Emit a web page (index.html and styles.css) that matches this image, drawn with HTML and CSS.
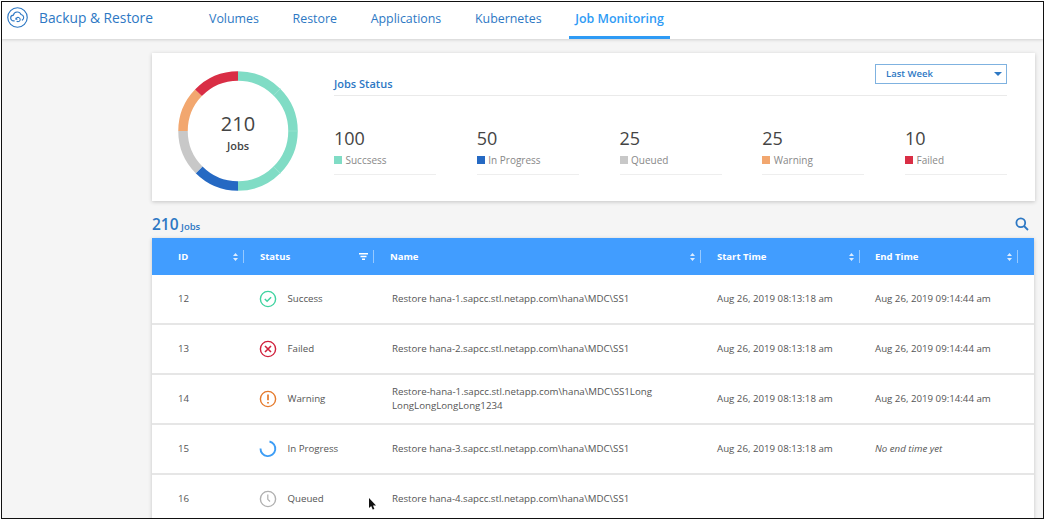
FILE: index.html
```html
<!DOCTYPE html>
<html>
<head>
  <title>Backup &amp; Restore</title>
  <meta name="viewport" content="width=device-width, initial-scale=1">
  <link rel="stylesheet" href="styles.css">
</head>
<body>
  <div class="frame">
    <div class="topbar">
      <div class="brand">
        <svg class="brand-icon" width="21" height="21" viewBox="0 0 22 22" fill="none" stroke="#2d78c4">
          <circle cx="11" cy="11" r="10.2" stroke-width="1.2"/>
          <path d="M8 14.5H7a3 3 0 0 1-.3-6 4.2 4.2 0 0 1 8-.6 3.2 3.2 0 0 1 .9 6.1" stroke-width="1.2"/>
          <path d="M9.5 12.5a2.2 2.2 0 1 1 .6 2.2M9.3 11.2v1.6h1.6" stroke-width="1.1"/>
        </svg>
        <span class="brand-name">Backup &amp; Restore</span>
      </div>
      <nav class="tabs">
        <a class="tab">Volumes</a>
        <a class="tab">Restore</a>
        <a class="tab">Applications</a>
        <a class="tab">Kubernetes</a>
        <a class="tab active">Job Monitoring</a>
      </nav>
    </div>

    <div class="content">
      <section class="card">
        <div class="donut">
          <svg width="120" height="120" viewBox="0 0 120 120" fill="none" stroke-width="9.5">
            <g transform="rotate(-90 60 60)">
              <circle cx="60" cy="60" r="55" pathLength="360" stroke="#80dcc5" stroke-dasharray="180 180"/>
              <circle cx="60" cy="60" r="55" pathLength="360" stroke="#2569c3" stroke-dasharray="45 315" stroke-dashoffset="-180"/>
              <circle cx="60" cy="60" r="55" pathLength="360" stroke="#c8c8c8" stroke-dasharray="45 315" stroke-dashoffset="-225"/>
              <circle cx="60" cy="60" r="55" pathLength="360" stroke="#f2a76f" stroke-dasharray="44 316" stroke-dashoffset="-270"/>
              <circle cx="60" cy="60" r="55" pathLength="360" stroke="#d92e45" stroke-dasharray="46 314" stroke-dashoffset="-314"/>
              <circle cx="60" cy="60" r="55" pathLength="360" stroke="#a4e6d6" stroke-width="10" stroke-dasharray="0.6 44.4 0.6 44.4 0.6 269.4" stroke-dashoffset="-44.7"/>
            </g>
          </svg>
          <div class="donut-label">
            <div class="donut-num">210</div>
            <div class="donut-txt">Jobs</div>
          </div>
        </div>
        <div class="summary">
          <div class="summary-head">
            <span class="summary-title">Jobs Status</span>
            <div class="select">Last Week<i class="caret"></i></div>
          </div>
          <div class="stats">
            <div class="stat"><div class="stat-num">100</div><div class="stat-lbl"><i class="dot teal"></i>Succsess</div></div>
            <div class="stat"><div class="stat-num">50</div><div class="stat-lbl"><i class="dot blue"></i>In Progress</div></div>
            <div class="stat"><div class="stat-num">25</div><div class="stat-lbl"><i class="dot grey"></i>Queued</div></div>
            <div class="stat"><div class="stat-num">25</div><div class="stat-lbl"><i class="dot orange"></i>Warning</div></div>
            <div class="stat"><div class="stat-num">10</div><div class="stat-lbl"><i class="dot red"></i>Failed</div></div>
          </div>
        </div>
      </section>

      <div class="jobs-head">
        <div class="jobs-count"><b>210</b> <span>Jobs</span></div>
        <svg width="14" height="14" viewBox="0 0 14 14" fill="none" stroke="#2d78c4" stroke-width="1.8">
          <circle cx="5.8" cy="5.8" r="4.4"/>
          <path d="M9 9l4 4"/>
        </svg>
      </div>

      <div class="table">
        <div class="row head">
          <div class="cell id">ID<svg class="sort" width="5" height="8" viewBox="0 0 5 8"><path d="M2.5 0L5 3H0zM2.5 8L0 5h5z"/></svg></div>
          <div class="cell status">Status<svg class="filter" width="9" height="7" viewBox="0 0 9 7"><path d="M0 0h9v1.6H0zM1.5 2.8h6v1.4h-6zM3 5.4h3V7H3z"/></svg></div>
          <div class="cell name">Name<svg class="sort" width="5" height="8" viewBox="0 0 5 8"><path d="M2.5 0L5 3H0zM2.5 8L0 5h5z"/></svg></div>
          <div class="cell start">Start Time<svg class="sort" width="5" height="8" viewBox="0 0 5 8"><path d="M2.5 0L5 3H0zM2.5 8L0 5h5z"/></svg></div>
          <div class="cell end">End Time<svg class="sort" width="5" height="8" viewBox="0 0 5 8"><path d="M2.5 0L5 3H0zM2.5 8L0 5h5z"/></svg></div>
        </div>

        <div class="row">
          <div class="cell id">12</div>
          <div class="cell status">
            <svg class="st-icon" width="18" height="18" viewBox="0 0 18 18" fill="none" stroke="#3fd3a0" stroke-width="1.4"><circle cx="9" cy="9" r="7.6"/><path d="M5.8 9l2.3 2.2 4-4" stroke-width="1.5"/></svg>
            Success
          </div>
          <div class="cell name">Restore hana-1.sapcc.stl.netapp.com\hana\MDC\SS1</div>
          <div class="cell start">Aug 26, 2019 08:13:18 am</div>
          <div class="cell end">Aug 26, 2019 09:14:44 am</div>
        </div>

        <div class="row">
          <div class="cell id">13</div>
          <div class="cell status">
            <svg class="st-icon" width="18" height="18" viewBox="0 0 18 18" fill="none" stroke="#d0213c" stroke-width="1.4"><circle cx="9" cy="9" r="7.6"/><path d="M6 6l6 6M12 6l-6 6" stroke-width="1.6"/></svg>
            Failed
          </div>
          <div class="cell name">Restore hana-2.sapcc.stl.netapp.com\hana\MDC\SS1</div>
          <div class="cell start">Aug 26, 2019 08:13:18 am</div>
          <div class="cell end">Aug 26, 2019 09:14:44 am</div>
        </div>

        <div class="row">
          <div class="cell id">14</div>
          <div class="cell status">
            <svg class="st-icon" width="18" height="18" viewBox="0 0 18 18" fill="none" stroke="#e57a2c" stroke-width="1.4"><circle cx="9" cy="9" r="7.6"/><path d="M9 4.6v5.6M9 12v1.6" stroke-width="1.7"/></svg>
            Warning
          </div>
          <div class="cell name">Restore-hana-1.sapcc.stl.netapp.com\hana\MDC\SS1Long<br>LongLongLongLong1234</div>
          <div class="cell start">Aug 26, 2019 08:13:18 am</div>
          <div class="cell end">Aug 26, 2019 09:14:44 am</div>
        </div>

        <div class="row">
          <div class="cell id">15</div>
          <div class="cell status">
            <svg class="st-icon" width="18" height="18" viewBox="0 0 18 18" fill="none" stroke="#3d9df5" stroke-width="1.9"><path d="M10.5 1.5a7.4 7.4 0 1 1-9 7"/></svg>
            In Progress
          </div>
          <div class="cell name">Restore hana-3.sapcc.stl.netapp.com\hana\MDC\SS1</div>
          <div class="cell start">Aug 26, 2019 08:13:18 am</div>
          <div class="cell end note">No end time yet</div>
        </div>

        <div class="row">
          <div class="cell id">16</div>
          <div class="cell status">
            <svg class="st-icon" width="18" height="18" viewBox="0 0 18 18" fill="none" stroke="#b0b0b0" stroke-width="1.4"><circle cx="9" cy="9" r="7.6"/><path d="M8.8 4.4v4.9l2.2 2.2" stroke-width="1.2"/></svg>
            Queued
          </div>
          <div class="cell name">Restore hana-4.sapcc.stl.netapp.com\hana\MDC\SS1</div>
          <div class="cell start"></div>
          <div class="cell end"></div>
        </div>
      </div>
    </div>

    <svg class="cursor" width="9" height="13" viewBox="0 0 9 13"><path d="M1 0v10l2.2-2 1.5 3.6 1.7-.7L5 7.4h3z" fill="#111"/></svg>
  </div>
</body>
</html>
```

FILE: styles.css
```css
* {
  box-sizing: border-box;
}

html, body {
  margin: 0;
  height: 100%;
}

body {
  padding: 1px 0 0 1px;
  background: #fff;
  font-family: "Open Sans", "Liberation Sans", sans-serif;
  color: #555;
  overflow: hidden;
}

.frame {
  position: relative;
  width: 1043px;
  height: 518px;
  background: #f5f5f5;
  border: 1px solid #111;
  overflow: hidden;
}

/* top bar */
.topbar {
  display: flex;
  height: 37px;
  background: #fff;
  box-shadow: 0 1px 3px rgba(0,0,0,.15);
}

.brand {
  display: flex;
  align-items: center;
  width: 201px;
  padding: 0 0 6px 5px;
}

.brand-icon {
  margin-right: 11px;
}

.brand-name {
  font-size: 13.8px;
  color: #2d78c4;
}

.tabs {
  display: flex;
  height: 37px;
}

.tab {
  padding: 0 6px;
  margin-right: 21.7px;
  line-height: 33px;
  font-size: 12.4px;
  color: #2d78c4;
}

.tab.active {
  margin: 0;
  font-weight: 600;
  color: #2e9bf5;
  border-bottom: 3px solid #2e9bf5;
}

/* content */
.content {
  width: 883px;
  margin: 14px 0 0 150px;
}

.card {
  display: flex;
  height: 148px;
  background: #fff;
  box-shadow: 0 1px 4px rgba(0,0,0,.2);
}

.donut {
  position: relative;
  width: 120px;
  height: 120px;
  margin: 18px 0 0 26px;
}

.donut-label {
  position: absolute;
  top: 41px;
  left: 0;
  width: 120px;
  text-align: center;
  color: #444;
}

.donut-num {
  font-size: 20px;
  line-height: 24px;
}

.donut-txt {
  margin-top: 2px;
  font-size: 11px;
  font-weight: 600;
  line-height: 15px;
}

.summary {
  width: 673px;
  margin-left: 36px;
}

.summary-head {
  display: flex;
  justify-content: space-between;
  height: 43px;
  padding-top: 11px;
  border-bottom: 1px solid #eaeaea;
}

.summary-title {
  margin-top: 12px;
  font-size: 11px;
  font-weight: 600;
  color: #2d78c4;
}

.select {
  position: relative;
  width: 132px;
  height: 20px;
  padding-left: 10px;
  border: 1px solid #7fb2e0;
  font-size: 9.5px;
  font-weight: 600;
  line-height: 18px;
  color: #2d78c4;
}

.caret {
  position: absolute;
  top: 7px;
  right: 4px;
  border: 4px solid transparent;
  border-top-color: #2d78c4;
  border-bottom: 0;
}

.stats {
  display: flex;
  justify-content: space-between;
  margin-top: 30px;
}

.stat {
  width: 102px;
  height: 49px;
  border-bottom: 1px solid #eee;
}

.stat-num {
  font-size: 18px;
  line-height: 24px;
  color: #444;
}

.stat-lbl {
  display: flex;
  align-items: center;
  margin-top: 3px;
  font-size: 10px;
  color: #888;
}

.dot {
  width: 8px;
  height: 8px;
  margin-right: 3.5px;
}
.teal { background: #80dcc5; }
.blue { background: #2569c3; }
.grey { background: #c8c8c8; }
.orange { background: #f2a76f; }
.red { background: #d92e45; }

.jobs-head {
  display: flex;
  justify-content: space-between;
  align-items: center;
  height: 37px;
  padding: 9px 6px 0 0;
}

.jobs-count {
  color: #2d78c4;
  font-size: 9.5px;
  font-weight: 600;
}

.jobs-count b {
  font-size: 15.5px;
  font-weight: 600;
}

/* table */
.table {
  width: 882px;
  background: #fff;
  box-shadow: 0 1px 4px rgba(0,0,0,.2);
}

.row {
  display: grid;
  grid-template-columns: 92px 130px 327px 159px 158px;
  align-items: center;
  height: 50px;
  border-bottom: 2px solid #e6e6e6;
  font-size: 9.7px;
  color: #555;
}

.row.head {
  height: 37px;
  background: #419dff;
  border-bottom: 0;
  font-size: 9.5px;
  color: #fff;
  font-weight: 700;
}

.cell {
  display: flex;
  align-items: center;
  line-height: 14px;
}

.row .id {
  padding-left: 26px;
}

.row .status {
  padding-left: 15px;
}

.row .name {
  display: block;
  padding-left: 18px;
}

.row .start {
  padding-left: 16px;
}

.row .end {
  padding-left: 15px;
}

.row.head .cell {
  position: relative;
  display: flex;
  height: 13px;
}

.row.head .status,
.row.head .name {
  padding-left: 16px;
}

/* thin separator after each header cell */
.head .cell::after {
  content: "";
  position: absolute;
  top: 0;
  right: 0;
  width: 1px;
  height: 13px;
  background: rgba(255,255,255,.45);
}

.sort,
.filter {
  position: absolute;
  top: 3px;
  right: 6px;
  fill: #dcecff;
}

.filter {
  fill: #fff;
}

.st-icon {
  margin-right: 10.5px;
}

.note {
  font-style: italic;
}

.cursor {
  position: absolute;
  top: 496px;
  left: 366px;
}
```
